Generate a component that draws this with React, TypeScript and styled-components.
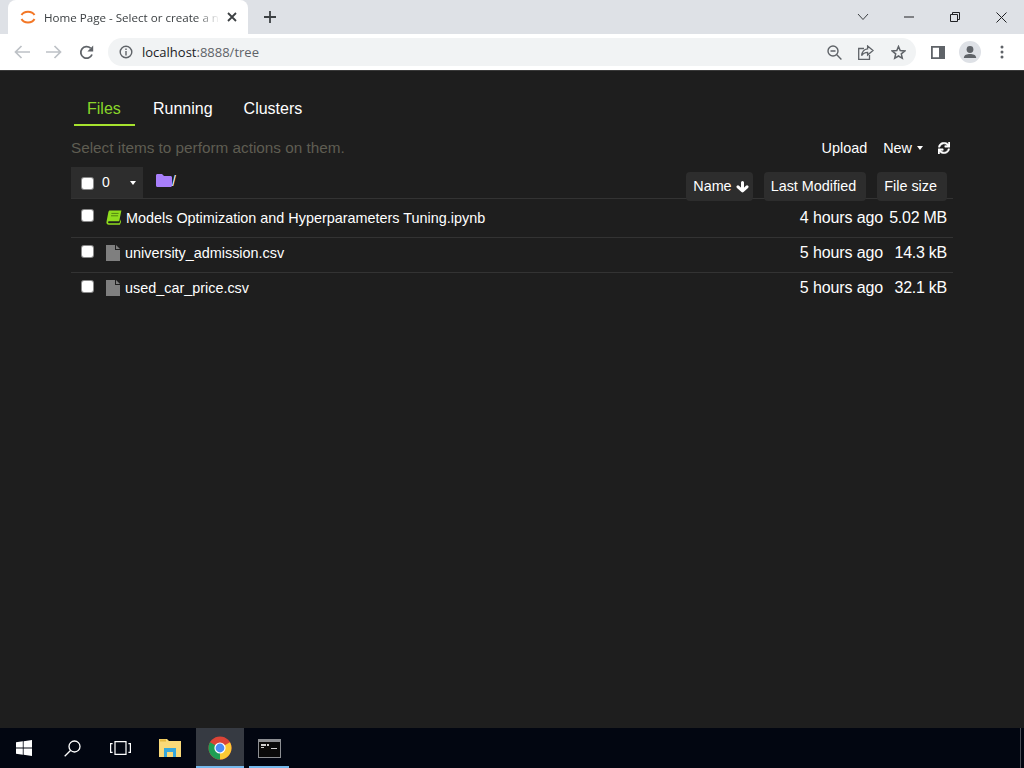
import React from "react";
import styled, { createGlobalStyle } from "styled-components";
import { FaSync } from "react-icons/fa";

const Global = createGlobalStyle`
  html, body { margin: 0; padding: 0; height: 100%; background: #1e1e1e; }
  #root { height: 100%; }
  * { box-sizing: border-box; }
`;

const Screen = styled.div`
  width: 1024px;
  height: 768px;
  display: flex;
  flex-direction: column;
  overflow: hidden;
  font-family: "Liberation Sans", Arial, sans-serif;
`;

/* browser chrome */
const TabStrip = styled.div`
  height: 34px;
  background: #dee1e6;
  display: flex;
  align-items: flex-end;
  padding-left: 8px;
  flex: none;
`;

const BrowserTab = styled.div`
  width: 240px;
  height: 34px;
  background: #fff;
  border-radius: 8px 8px 0 0;
  display: flex;
  align-items: center;
  padding: 0 11px 0 11px;
  gap: 7px;
`;

const TabTitle = styled.div`
  flex: 1;
  font-family: "Open Sans", sans-serif;
  font-size: 11.6px;
  color: #3c4043;
  white-space: nowrap;
  overflow: hidden;
  -webkit-mask-image: linear-gradient(90deg, #000 86%, transparent 100%);
  mask-image: linear-gradient(90deg, #000 86%, transparent 100%);
`;

const NewTab = styled.div`
  width: 28px;
  height: 34px;
  margin-left: 8px;
  display: flex;
  align-items: center;
  justify-content: center;
`;

const WindowButtons = styled.div`
  margin-left: auto;
  height: 34px;
  display: flex;
  align-items: center;
`;

const WinButton = styled.div<{ $w: number }>`
  width: ${(p) => p.$w}px;
  height: 30px;
  display: flex;
  align-items: center;
  justify-content: center;
`;

const Toolbar = styled.div`
  height: 37px;
  background: #fff;
  border-bottom: 1px solid #3a3a3a;
  display: flex;
  align-items: center;
  padding-left: 6px;
  flex: none;
`;

const NavIcon = styled.div<{ $w: number }>`
  width: ${(p) => p.$w}px;
  height: 24px;
  display: flex;
  align-items: center;
  justify-content: center;
  flex: none;
`;

const Omnibox = styled.div`
  width: 808px;
  height: 28px;
  margin-left: 6px;
  border-radius: 14px;
  background: #f1f3f4;
  display: flex;
  align-items: center;
  padding: 0 2px 0 11px;
`;

const Url = styled.div`
  margin-left: 9px;
  font-family: "Open Sans", sans-serif;
  font-size: 13px;
  color: #5f6368;
  flex: 1;
  b { font-weight: 400; color: #202124; }
`;

const AvatarWrap = styled.div`
  width: 22px;
  height: 22px;
  border-radius: 50%;
  background: #dee1e6;
  overflow: hidden;
  display: flex;
  justify-content: center;
`;

/* jupyter page */
const Page = styled.main`
  flex: 1;
  background: #1e1e1e;
  padding: 21px 71px 0;
  color: #fff;
`;

const TabBar = styled.div`
  display: flex;
  height: 34px;
  padding-left: 3px;
`;

const TreeTab = styled.div<{ $active?: boolean }>`
  padding: 8px 13px 0;
  margin-right: 5px;
  width: ${(p) => (p.$active ? "61px" : "auto")};
  font-size: 16px;
  line-height: 18px;
  color: ${(p) => (p.$active ? "#8ad62a" : "#fff")};
  border-bottom: 2px solid ${(p) => (p.$active ? "#a6e22e" : "transparent")};
`;

const ActionRow = styled.div`
  height: 41px;
  display: flex;
  align-items: center;
  padding-top: 2px;
`;

const Hint = styled.div`
  font-size: 15.3px;
  color: #5f5d52;
  flex: 1;
  margin-top: 1px;
`;

const ActionLink = styled.div`
  font-size: 14.4px;
  color: #fff;
  display: flex;
  align-items: center;
  margin-right: 16px;
`;

const Caret = styled.span`
  display: inline-block;
  margin-left: 5px;
  border-top: 4px solid #fff;
  border-left: 3.5px solid transparent;
  border-right: 3.5px solid transparent;
`;

const RefreshIcon = styled.div`
  width: 15px;
  margin-left: -1px;
  display: flex;
`;

const HeaderRow = styled.div`
  height: 32px;
  display: flex;
  border-bottom: 1px solid #333;
`;

const SelectBox = styled.div`
  width: 72px;
  height: 31px;
  background: #2d2d2d;
  display: flex;
  align-items: center;
  padding: 2px 0 0 11px;
  font-size: 14px;
`;

const Check = styled.span<{ $top?: number }>`
  display: block;
  width: 11px;
  height: 11px;
  background: #fff;
  border-radius: 2px;
  flex: none;
  box-shadow: 0 0 0 1px #8a8a8a;
  margin-top: ${(p) => p.$top ?? 0}px;
`;

const Count = styled.span`
  margin-left: 9px;
  width: 28px;
  margin-top: -3px;
`;

const SelectCaret = styled(Caret)`
  margin: -2px 0 0 0;
`;

const Crumb = styled.div`
  display: flex;
  align-items: flex-start;
  margin-left: 13px;
  padding-top: 7px;
  font-size: 14px;
  line-height: 14px;
  flex: 1;
`;

const SortButtons = styled.div`
  display: flex;
  gap: 11px;
  padding: 5px 6px 0 0;
`;

const SortButton = styled.div`
  height: 29px;
  padding: 0 10px 2px 7px;
  background: #2d2d2d;
  border-radius: 4px;
  font-size: 14.4px;
  display: flex;
  align-items: center;
  gap: 4px;
  svg { margin: 2px -6px 0 0; }
`;

const FileRow = styled.div<{ $first?: boolean }>`
  height: ${(p) => (p.$first ? "39px" : "35px")};
  display: flex;
  align-items: center;
  padding: ${(p) => (p.$first ? "3px" : "0")} 6px 4px 11px;
  border-bottom: 1px solid #333;
  &:last-child { border-bottom: 0; height: 34px; }
`;

const FileIcon = styled.div`
  margin-left: 13px;
  width: 16px;
  display: flex;
  flex: none;
`;

const FileName = styled.div<{ $notebook?: boolean }>`
  flex: 1;
  font-size: 14.4px;
  margin-left: ${(p) => (p.$notebook ? "4px" : "3px")};
  color: #fff;
`;

const Modified = styled.div`
  font-size: 16px;
  letter-spacing: -0.12px;
`;

const Size = styled.div`
  font-size: 16px;
  width: 64px;
  text-align: right;
  letter-spacing: -0.25px;
`;

/* windows taskbar */
const Taskbar = styled.div`
  height: 40px;
  background: #020611;
  display: flex;
  flex: none;
`;

const TaskItem = styled.div<{ $w?: number; $active?: boolean; $inset?: number }>`
  position: relative;
  width: ${(p) => p.$w ?? 48}px;
  height: 40px;
  display: flex;
  align-items: center;
  justify-content: center;
  background: ${(p) => (p.$active ? "#363a42" : "transparent")};
  ${(p) =>
    p.$inset !== undefined &&
    `&::after {
      content: "";
      position: absolute;
      left: ${p.$inset}px;
      right: ${p.$inset}px;
      bottom: 0;
      height: 2px;
      background: #76b9ed;
    }`}
`;

const TaskEnd = styled.div`
  margin-left: auto;
  width: 4px;
  border-left: 1px solid #4a4d55;
`;

const Favicon = () => (
  <svg width="18" height="18" viewBox="0 0 18 18" fill="none" stroke="#f37726" strokeWidth="2">
    <path d="M2.5 7 C5 2.5 13 2.5 15.5 7" />
    <path d="M2.5 11 C5 15.5 13 15.5 15.5 11" />
  </svg>
);

const Stroke = "#5f6368";

const files = [
  { name: "Models Optimization and Hyperparameters Tuning.ipynb", modified: "4 hours ago", size: "5.02 MB", notebook: true },
  { name: "university_admission.csv", modified: "5 hours ago", size: "14.3 kB" },
  { name: "used_car_price.csv", modified: "5 hours ago", size: "32.1 kB" },
];

const NotebookGlyph = () => (
  <svg width="16" height="15" viewBox="0 0 16 15">
    <path d="M3.8 0.4 H15.4 L13.2 11.2 H3.2 C2.4 11.2 2.1 11.7 2.1 12.2 C2.1 12.8 2.6 13.2 3.2 13.2 H13.4 L15 9.2 V12 L13.9 14.7 H2.8 C1 14.7 0.1 13.4 0.5 11.8 L2.4 2 C2.6 1 3.1 0.4 3.8 0.4 Z" fill="#8fdc1e" />
    <path d="M5.4 3.4 H12.6 M5 5.8 H12.1" stroke="#4c7a10" strokeWidth="0.9" />
  </svg>
);

const CsvGlyph = () => (
  <svg width="14" height="16" viewBox="0 0 14 16">
    <path d="M0 0 H9 V5 H14 V16 H0 Z" fill="#7f7f7f" />
    <path d="M10 0 L14 4 H10 Z" fill="#7f7f7f" />
  </svg>
);

export default function App() {
  return (
    <Screen>
      <Global />
      <TabStrip>
        <BrowserTab>
          <Favicon />
          <TabTitle>Home Page - Select or create a notebook</TabTitle>
          <svg width="10" height="10" viewBox="0 0 10 10" stroke="#3c4043" strokeWidth="1.8">
            <path d="M1 1 L9 9 M9 1 L1 9" />
          </svg>
        </BrowserTab>
        <NewTab>
          <svg width="12" height="12" viewBox="0 0 12 12" stroke="#3c4043" strokeWidth="1.8">
            <path d="M6 0 V12 M0 6 H12" />
          </svg>
        </NewTab>
        <WindowButtons>
          <WinButton $w={46}>
            <svg width="12" height="8" viewBox="0 0 12 8" fill="none" stroke="#3c4043">
              <path d="M1 1 L6 6.5 L11 1" />
            </svg>
          </WinButton>
          <WinButton $w={46}>
            <svg width="10" height="2" viewBox="0 0 10 2" stroke="#202124">
              <path d="M0 1 H10" />
            </svg>
          </WinButton>
          <WinButton $w={46}>
            <svg width="10" height="10" viewBox="0 0 10 10" fill="none" stroke="#202124">
              <path d="M0.5 2.5 H7.5 V9.5 H0.5 Z M2.5 2.5 V0.5 H9.5 V7.5 H7.5" />
            </svg>
          </WinButton>
          <WinButton $w={46}>
            <svg width="11" height="11" viewBox="0 0 11 11" stroke="#202124">
              <path d="M0.5 0.5 L10.5 10.5 M10.5 0.5 L0.5 10.5" />
            </svg>
          </WinButton>
        </WindowButtons>
      </TabStrip>
      <Toolbar>
        <NavIcon $w={32}>
          <svg width="16" height="14" viewBox="0 0 16 14" fill="none" stroke="#bdc1c6" strokeWidth="1.7">
            <path d="M16 7 H1.5 M7.5 1 L1.5 7 L7.5 13" />
          </svg>
        </NavIcon>
        <NavIcon $w={32}>
          <svg width="16" height="14" viewBox="0 0 16 14" fill="none" stroke="#bdc1c6" strokeWidth="1.7">
            <path d="M0 7 H14.5 M8.5 1 L14.5 7 L8.5 13" />
          </svg>
        </NavIcon>
        <NavIcon $w={32}>
          <svg width="15" height="15" viewBox="0 0 15 15" fill="none">
            <path d="M13 9.5 A5.8 5.8 0 1 1 11.6 3.2" stroke={Stroke} strokeWidth="1.8" />
            <path d="M14.2 0.6 V6.4 H8.4 Z" fill={Stroke} />
          </svg>
        </NavIcon>
        <Omnibox>
          <svg width="14" height="14" viewBox="0 0 14 14" fill="none" stroke={Stroke} strokeWidth="1.4">
            <circle cx="7" cy="7" r="5.8" />
            <path d="M7 6 V10.4 M7 3.5 V5" />
          </svg>
          <Url><b>localhost</b>:8888/tree</Url>
          <NavIcon $w={32}>
            <svg width="15" height="15" viewBox="0 0 15 15" fill="none" stroke={Stroke} strokeWidth="1.4">
              <circle cx="6" cy="6" r="5" />
              <path d="M3.5 6 H8.5 M9.8 9.8 L14.4 14.4" />
            </svg>
          </NavIcon>
          <NavIcon $w={32}>
            <svg width="16" height="15" viewBox="0 0 16 15" fill="none" stroke={Stroke} strokeWidth="1.3">
              <path d="M6 3.5 H0.7 V14.3 H11.5 V10" />
              <path d="M9.6 1 L15 5.5 L9.6 10 V7.4 C7 7.4 5 8.4 3.6 10.6 C4 7 6 4.2 9.6 3.8 Z" />
            </svg>
          </NavIcon>
          <NavIcon $w={32}>
            <svg width="15" height="15" viewBox="0 0 15 15" fill="none" stroke={Stroke} strokeWidth="1.5">
              <path d="M7.5 1.5 L9.2 5.6 L13.7 6 L10.3 8.9 L11.3 13.3 L7.5 11 L3.7 13.3 L4.7 8.9 L1.3 6 L5.8 5.6 Z" />
            </svg>
          </NavIcon>
        </Omnibox>
        <NavIcon $w={43}>
          <svg width="14" height="13" viewBox="0 0 14 13">
            <path d="M0 0 H14 V13 H0 Z M1.8 1.8 V11.2 H8 V1.8 Z" fill={Stroke} fillRule="evenodd" />
          </svg>
        </NavIcon>
        <NavIcon $w={22}>
          <AvatarWrap>
            <svg width="22" height="22" viewBox="0 0 22 22" fill={Stroke}>
              <circle cx="11" cy="8.5" r="3.4" />
              <path d="M4.8 17 C5 13.8 8 13 11 13 C14 13 17 13.8 17.2 17 Z" />
            </svg>
          </AvatarWrap>
        </NavIcon>
        <NavIcon $w={42}>
          <svg width="4" height="14" viewBox="0 0 4 14" fill={Stroke}>
            <circle cx="2" cy="2" r="1.5" />
            <circle cx="2" cy="7" r="1.5" />
            <circle cx="2" cy="12" r="1.5" />
          </svg>
        </NavIcon>
      </Toolbar>
      <Page>
        <TabBar>
          <TreeTab $active>Files</TreeTab>
          <TreeTab>Running</TreeTab>
          <TreeTab>Clusters</TreeTab>
        </TabBar>
        <ActionRow>
          <Hint>Select items to perform actions on them.</Hint>
          <ActionLink>Upload</ActionLink>
          <ActionLink>New<Caret /></ActionLink>
          <RefreshIcon>
            <FaSync size={12} color="#fff" stroke="#fff" strokeWidth={18} />
          </RefreshIcon>
        </ActionRow>
        <HeaderRow>
          <SelectBox>
            <Check />
            <Count>0</Count>
            <SelectCaret />
          </SelectBox>
          <Crumb>
            <svg width="16" height="13" viewBox="0 0 16 13">
              <path d="M1.5 0 H6 L8 2 H14.5 C15.4 2 16 2.6 16 3.5 V11.5 C16 12.4 15.4 13 14.5 13 H1.5 C0.6 13 0 12.4 0 11.5 V1.5 C0 0.6 0.6 0 1.5 0 Z" fill="#a87ffb" />
            </svg>
            /
          </Crumb>
          <SortButtons>
            <SortButton>
              Name
              <svg width="13" height="12" viewBox="0 0 13 12" fill="none" stroke="#fff" strokeWidth="3" strokeLinecap="round" strokeLinejoin="round">
                <path d="M6.5 1.5 V9.5 M2 5.8 L6.5 10 L11 5.8" />
              </svg>
            </SortButton>
            <SortButton>Last Modified</SortButton>
            <SortButton>File size</SortButton>
          </SortButtons>
        </HeaderRow>
        {files.map((f, i) => (
          <FileRow key={f.name} $first={i === 0}>
            <Check $top={-4} />
            <FileIcon>{f.notebook ? <NotebookGlyph /> : <CsvGlyph />}</FileIcon>
            <FileName $notebook={f.notebook}>{f.name}</FileName>
            <Modified>{f.modified}</Modified>
            <Size>{f.size}</Size>
          </FileRow>
        ))}
      </Page>
      <Taskbar>
        <TaskItem>
          <svg width="16" height="16" viewBox="0 0 16 16" fill="#fff">
            <path d="M0 2.3 L6.8 1.3 V7.6 H0 Z M7.6 1.2 L16 0 V7.6 H7.6 Z M0 8.4 H6.8 V14.7 L0 13.7 Z M7.6 8.4 H16 V16 L7.6 14.8 Z" />
          </svg>
        </TaskItem>
        <TaskItem>
          <svg width="17" height="17" viewBox="0 0 17 17" fill="none" stroke="#fff" strokeWidth="1.3">
            <circle cx="10.5" cy="6.5" r="5.5" />
            <path d="M6.5 10.5 L0.7 16.3" />
          </svg>
        </TaskItem>
        <TaskItem>
          <svg width="21" height="14" viewBox="0 0 21 14" fill="none" stroke="#fff" strokeWidth="1.2">
            <path d="M5 0.6 H16 V13.4 H5 Z" />
            <path d="M2.6 2.6 H0.6 V11.4 H2.6 M18.4 2.6 H20.4 V11.4 H18.4" />
          </svg>
        </TaskItem>
        <TaskItem $w={52}>
          <svg width="22" height="18" viewBox="0 0 22 18">
            <path d="M0 0 H8 L10 2 H22 V18 H0 Z" fill="#f9d978" />
            <path d="M1 0.5 H7 V2.5 H1 Z" fill="#e5b83f" />
            <path d="M5 9 H17 V18 H14 V13 H8 V18 H5 Z" fill="#35a7dc" />
          </svg>
        </TaskItem>
        <TaskItem $active $inset={0}>
          <svg width="24" height="24" viewBox="0 0 24 24">
            <circle cx="12" cy="12" r="11.5" fill="#db4437" />
            <path d="M12 12 L22 6.3 A11.5 11.5 0 0 1 12 23.5 Z" fill="#fcc934" />
            <path d="M12 12 L12 23.5 A11.5 11.5 0 0 1 2 6.3 Z" fill="#1e9e54" />
            <circle cx="12" cy="12" r="5.6" fill="#fff" />
            <circle cx="12" cy="12" r="4.4" fill="#4b8bf5" />
          </svg>
        </TaskItem>
        <TaskItem $w={50} $inset={5}>
          <svg width="23" height="19" viewBox="0 0 23 19">
            <path d="M0 0 H23 V19 H0 Z" fill="#8d8f93" />
            <path d="M1 3 H22 V18 H1 Z" fill="#0a0a0a" />
            <path d="M3 5 H8 V7 H3 Z M9 5 H11 V7 H9 Z M3 8 H6 V9 H3 Z M13 9 H19 V10 H13 Z" fill="#d0d0d0" />
          </svg>
        </TaskItem>
        <TaskEnd />
      </Taskbar>
    </Screen>
  );
}
